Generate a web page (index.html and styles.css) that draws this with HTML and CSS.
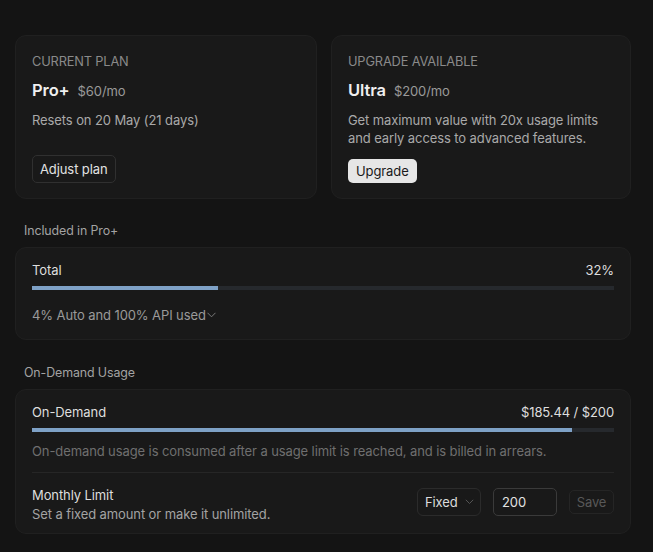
FILE: index.html
```html
<!DOCTYPE html>
<html lang="en">
<head>
<meta charset="utf-8">
<title>Usage</title>
<link rel="stylesheet" href="styles.css">
</head>
<body>
<div class="page">
  <div class="plans">
    <div class="card plan">
      <div class="eyebrow">CURRENT PLAN</div>
      <div class="plan-title"><span class="plan-name">Pro+</span><span class="plan-price">$60/mo</span></div>
      <div class="plan-desc">Resets on 20 May (21 days)</div>
      <button class="btn btn-outline">Adjust plan</button>
    </div>
    <div class="card plan">
      <div class="eyebrow">UPGRADE AVAILABLE</div>
      <div class="plan-title"><span class="plan-name">Ultra</span><span class="plan-price">$200/mo</span></div>
      <div class="plan-desc">Get maximum value with 20x usage limits and early access to advanced features.</div>
      <button class="btn btn-light">Upgrade</button>
    </div>
  </div>

  <div class="section-label">Included in Pro+</div>
  <div class="card usage">
    <div class="row-head"><span>Total</span><span>32%</span></div>
    <div class="bar"><div class="fill" style="width:32%"></div></div>
    <div class="breakdown">4% Auto and 100% API used<svg class="chev" width="9" height="6" viewBox="0 0 9 6"><path d="M0.5 0.8 L4.5 4.8 L8.5 0.8" fill="none" stroke="currentColor" stroke-width="1"/></svg></div>
  </div>

  <div class="section-label">On-Demand Usage</div>
  <div class="card usage">
    <div class="row-head"><span>On-Demand</span><span>$185.44 / $200</span></div>
    <div class="bar"><div class="fill" style="width:92.72%"></div></div>
    <div class="note">On-demand usage is consumed after a usage limit is reached, and is billed in arrears.</div>
    <div class="limit">
      <div class="limit-text">
        <div class="limit-title">Monthly Limit</div>
        <div class="limit-sub">Set a fixed amount or make it unlimited.</div>
      </div>
      <div class="controls">
        <div class="select">Fixed<svg class="chev-sm" width="9" height="6" viewBox="0 0 9 6"><path d="M0.8 0.8 L4.5 4.5 L8.2 0.8" fill="none" stroke="currentColor" stroke-width="1"/></svg></div>
        <div class="input">200</div>
        <button class="btn btn-save">Save</button>
      </div>
    </div>
  </div>
</div>
</body>
</html>
```

FILE: styles.css
```css
* { box-sizing: border-box; }
html, body { margin: 0; padding: 0; }
body {
  background: #141414;
  color: #e2e2e2;
  font-family: Inter, "Noto Sans", "Liberation Sans", sans-serif;
  font-size: 13px;
  letter-spacing: -0.1px;
  width: 653px;
  height: 552px;
  overflow: hidden;
}
.page {
  padding: 35px 22px 0 15px;
}
.card {
  background: #191919;
  border: 1px solid #202020;
  border-radius: 11px;
}
.plans {
  display: grid;
  grid-template-columns: 302px 300px;
  gap: 14px;
  height: 163px;
}
.plan {
  display: flex;
  flex-direction: column;
  align-items: flex-start;
  padding: 18px 16px 15px;
}
.eyebrow {
  color: #8a8a8a;
  font-size: 12.8px;
  line-height: 16px;
  letter-spacing: -0.15px;
}
.plan-title {
  display: flex;
  align-items: baseline;
  gap: 8px;
  line-height: 24px;
  margin-top: 8px;
}
.plan-name {
  font-size: 16.5px;
  font-weight: 600;
  color: #efefef;
}
.plan-price {
  font-size: 13px;
  color: #9a9a9a;
}
.plan-desc {
  margin-top: 8px;
  line-height: 18px;
  color: #a9a9a9;
}
.btn {
  font-family: inherit;
  font-size: 13px;
  letter-spacing: -0.1px;
  cursor: pointer;
}
.btn-outline {
  margin-top: auto;
  height: 28px;
  padding: 0 7px;
  background: #191919;
  color: #e2e2e2;
  border: 1px solid #303030;
  border-radius: 5px;
}
.btn-light {
  margin-top: 12px;
  height: 24px;
  padding: 0 8px;
  background: #e6e6e6;
  color: #1a1a1a;
  border: none;
  border-radius: 5px;
}
.section-label {
  color: #a3a3a3;
  font-size: 12.4px;
  line-height: 16px;
  padding: 25px 9px 8px;
}
.usage {
  padding: 12px 16px 14px;
}
.row-head {
  display: flex;
  justify-content: space-between;
  line-height: 20px;
  color: #dedede;
}
.bar {
  margin-top: 6px;
  height: 4px;
  background: #26292d;
}
.fill {
  height: 100%;
  background: #7ea1c6;
}
.breakdown {
  margin-top: 15px;
  line-height: 20px;
  color: #9a9a9a;
  display: flex;
  align-items: center;
}
.chev {
  color: #7a7a7a;
  margin-left: 1px;
}
.note {
  margin-top: 10px;
  line-height: 18px;
  color: #6f6f6f;
}
.limit {
  margin-top: 12px;
  border-top: 1px solid #262626;
  padding-top: 13px;
  display: flex;
  justify-content: space-between;
  align-items: flex-start;
  margin-bottom: -5px;
}
.limit-title {
  line-height: 19px;
  color: #dedede;
}
.limit-sub {
  line-height: 19px;
  color: #a3a3a3;
}
.controls {
  display: flex;
  align-items: center;
  gap: 12px;
  margin-top: 2px;
}
.select {
  width: 64px;
  height: 28px;
  border: 1px solid #2b2b2b;
  border-radius: 6px;
  display: flex;
  align-items: center;
  padding-left: 7px;
  color: #dcdcdc;
}
.chev-sm {
  color: #555;
  margin-left: 7px;
}
.input {
  width: 64px;
  height: 28px;
  border: 1px solid #3a3a3a;
  border-radius: 5px;
  display: flex;
  align-items: center;
  padding-left: 8px;
  color: #e2e2e2;
}
.btn-save {
  width: 45px;
  height: 24px;
  background: transparent;
  border: 1px solid #252525;
  border-radius: 5px;
  color: #585858;
  padding: 0;
}
```
